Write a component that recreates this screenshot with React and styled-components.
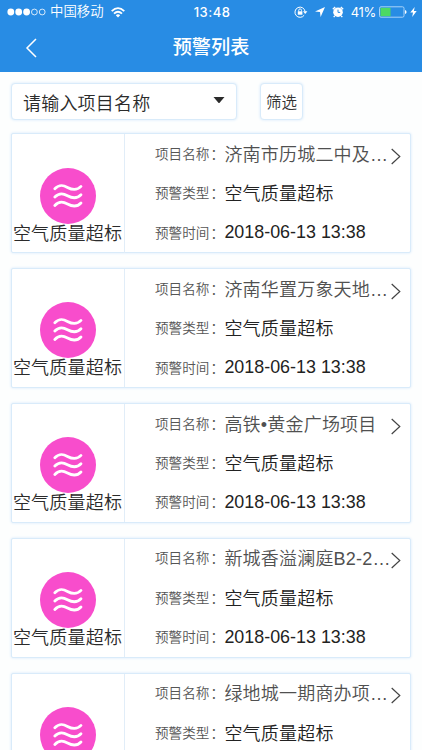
import React from "react";
import styled, { createGlobalStyle } from "styled-components";

const Global = createGlobalStyle`
  * { box-sizing: border-box; }
  html, body { margin: 0; height: 100%; overflow: hidden; background: #fdfefe; }
  body { font-family: "Liberation Sans", "Noto Sans CJK SC", sans-serif; color: #2b2b2b; font-weight: 350; }
`;
const Screen = styled.div`
  width: 422px;
  height: 750px;
  overflow: hidden;
  background: #fdfefe;
`;
const Header = styled.header`
  height: 72px;
  background: #288ce4;
  color: #fff;
`;
const StatusBar = styled.div`
  height: 24px;
  display: grid;
  grid-template-columns: 1fr auto 1fr;
  align-items: center;
  padding: 0 5px 0 7px;
`;
const StatusGroup = styled.div`
  display: flex;
  align-items: center;
  justify-content: ${(p) => (p.$end ? "flex-end" : "flex-start")};
`;
const Carrier = styled.span`
  font-size: 13.4px;
  line-height: 20px;
  margin: 0 7px 0 4px;
`;
const Clock = styled.span`
  font-family: Inter, sans-serif;
  font-size: 13px;
  font-weight: 500;
  letter-spacing: 0.5px;
`;
const Percent = styled.span`
  font-family: Inter, sans-serif;
  font-size: 13px;
  font-weight: 400;
  letter-spacing: -0.3px;
  margin: 0 3px 0 7px;
`;
const Icon = styled.svg`
  display: block;
  flex: none;
  margin-left: ${(p) => p.$gap || 0}px;
`;
const NavBar = styled.div`
  height: 48px;
  display: grid;
  grid-template-columns: 60px 1fr 60px;
  align-items: center;
`;
const Title = styled.h1`
  margin: 0;
  text-align: center;
  font-size: 19.2px;
  line-height: 28px;
  font-weight: 500;
`;
const BackButton = styled.button`
  border: 0;
  background: none;
  padding: 0 0 0 25px;
  color: inherit;
`;
const Filters = styled.div`
  display: flex;
  gap: 23px;
  padding: 11px 11px 0;
`;
const boxed = `
  border: 1px solid #d9ebfa;
  box-shadow: 0 0 3px #d5e9fb;
  background: #fff;
`;
const ProjectSelect = styled.div`
  ${boxed}
  width: 226px;
  height: 37px;
  border-radius: 4px;
  display: flex;
  align-items: center;
  justify-content: space-between;
  padding: 0 11px 0 11px;
  font-size: 18px;
  letter-spacing: 0.2px;
`;
const FilterButton = styled.button`
  ${boxed}
  width: 43px;
  height: 37px;
  border-radius: 4px;
  padding: 0 0 2px;
  font: inherit;
  font-size: 15.5px;
  color: #333;
`;
const List = styled.main`
  display: flex;
  flex-direction: column;
  gap: 14.8px;
  padding: 13.4px 11px 0;
`;
const Card = styled.article`
  ${boxed}
  height: 120px;
  flex: none;
  border-radius: 2px;
  display: grid;
  grid-template-columns: 113px 1fr;
`;
const Kind = styled.div`
  border-right: 1px solid #e1edf8;
  display: flex;
  flex-direction: column;
  align-items: center;
  padding-top: 33.3px;
  white-space: nowrap;
  font-size: 18px;
  letter-spacing: 0.2px;
`;
const KindLabel = styled.span`
  line-height: 20px;
  margin-right: 1px;
`;
const Details = styled.div`
  display: grid;
  grid-template-rows: repeat(3, 39.4px);
  padding-left: 30px;
`;
const Row = styled.div`
  display: flex;
  align-items: center;
  white-space: nowrap;
`;
const Label = styled.span`
  width: 69.4px;
  flex: none;
  font-size: 13.6px;
  color: #555;
  padding-bottom: 2px;
`;
const Colon = styled.span`
  padding-left: 1px;
`;
const Value = styled.span`
  font-size: ${(p) => (p.$latin ? 17.9 : 18)}px;
  letter-spacing: ${(p) => (p.$latin ? 0 : 0.2)}px;
  color: ${(p) => (p.$soft ? "#505050" : "#222")};
  width: 166.6px;
  flex: none;
  padding-bottom: ${(p) => (p.$latin ? 0 : 2)}px;
`;

const Signal = () => (
  <Icon width="39" height="8" viewBox="0 0 39 8">
    {[3.8, 11.7, 19.6].map((x) => <circle key={x} cx={x} cy="4" r="3.4" fill="#fff" />)}
    {[27.4, 35.2].map((x) => <circle key={x} cx={x} cy="4" r="2.9" fill="none" stroke="#fff" strokeWidth=".8" />)}
  </Icon>
);
const Wifi = () => (
  <Icon width="14" height="11" viewBox="0 0 14 11" fill="none" stroke="#fff" strokeWidth="1.8">
    <path d="M.7 4.1Q7-1.9 13.3 4.1M3 6.6Q7 2.9 11 6.6" />
    <path d="M4.8 8.2Q7 6.3 9.2 8.2L7 10.5Z" fill="#fff" stroke="none" />
  </Icon>
);
const RotationLock = () => (
  <Icon width="14" height="12" viewBox="0 0 14 12" fill="none" stroke="#fff">
    <path d="M10.2 9.2A5.1 5.1 0 1 1 11.1 5.5" />
    <path d="M9 5.3H13.4L11.2 8Z" fill="#fff" stroke="none" />
    <rect x="3.8" y="5.3" width="4.6" height="3.4" fill="#fff" stroke="none" />
    <path d="M4.7 5.5V4.3a1.4 1.4 0 0 1 2.8 0v1.2" strokeWidth=".9" />
  </Icon>
);
const Location = () => (
  <Icon $gap={7} width="10" height="10" viewBox="0 0 10 10">
    <path d="M10 0L5.6 10L5 5L0 4.4Z" fill="#fff" />
  </Icon>
);
const Alarm = () => (
  <Icon $gap={7} width="12" height="12" viewBox="0 0 12 12" fill="none">
    <circle cx="6" cy="6.2" r="4.8" fill="#fff" />
    <path d="M.8 3.3L3.2 1M11.2 3.3L8.8 1M2.8 9.8L1.7 11.2M9.2 9.8l1.1 1.4" stroke="#fff" strokeWidth="1.3" />
    <path d="M6 3.6V6.4H8.2" stroke="#288ce4" />
  </Icon>
);
const Battery = () => (
  <Icon width="28" height="12" viewBox="0 0 28 12">
    <rect x=".5" y=".8" width="24.5" height="10.4" rx="1.5" fill="none" stroke="#a9d3fa" />
    <rect x="1.5" y="1.8" width="10" height="8.4" fill="#4cd964" />
    <path d="M26 4Q27.6 4.3 27.6 6T26 8Z" fill="#fff" />
  </Icon>
);
const Bolt = () => (
  <Icon $gap={3} width="7" height="10" viewBox="0 0 7 10">
    <path d="M4.7 0L.3 5.6H3L2.2 10L6.7 4.1H3.9Z" fill="#fff" />
  </Icon>
);
const Back = () => (
  <Icon width="13" height="20" viewBox="0 0 13 20" fill="none" stroke="#fff" strokeWidth="1.5">
    <path d="M11 1L2 10L11 19" />
  </Icon>
);
const Caret = () => (
  <Icon width="12" height="9" viewBox="0 0 12 9">
    <path d="M.5 0H11.5L6.6 5.8Q6 6.4 5.4 5.8Z" fill="#2b2b2b" />
  </Icon>
);
const Air = () => (
  <Icon width="56" height="56" viewBox="0 0 56 56" fill="none">
    <circle cx="28" cy="28" r="28" fill="#f84dcc" />
    {[0, 8.3, 16.6].map((y) => (
      <path
        key={y}
        transform={`translate(0 ${y})`}
        d="M14.8 20.8C19.5 16 23.5 17.2 27.5 19.4S36.5 23.1 41 18.4"
        stroke="#fff"
        strokeWidth="2.8"
        strokeLinecap="round"
      />
    ))}
  </Icon>
);
const Chevron = () => (
  <Icon width="10" height="17" viewBox="0 0 10 17" fill="none" stroke="#444" strokeWidth="1.2">
    <path d="M.7 1L8.8 8.5L.7 16" />
  </Icon>
);
const ChevronSlot = styled.span`
  padding-top: 5px;
`;

const projects = ["济南市历城二中及…", "济南华置万象天地…", "高铁•黄金广场项目", "新城香溢澜庭B2-2…", "绿地城一期商办项…"];

const Field = ({ label, children }) => (
  <Row>
    <Label>{label}<Colon>：</Colon></Label>
    {children}
  </Row>
);

const AlertCard = ({ name }) => (
  <Card>
    <Kind>
      <Air />
      <KindLabel>空气质量超标</KindLabel>
    </Kind>
    <Details>
      <Field label="项目名称">
        <Value $soft>{name}</Value>
        <ChevronSlot><Chevron /></ChevronSlot>
      </Field>
      <Field label="预警类型">
        <Value>空气质量超标</Value>
      </Field>
      <Field label="预警时间">
        <Value $latin>2018-06-13 13:38</Value>
      </Field>
    </Details>
  </Card>
);

export default function App() {
  return (
    <Screen>
      <Global />
      <Header>
        <StatusBar>
          <StatusGroup>
            <Signal />
            <Carrier>中国移动</Carrier>
            <Wifi />
          </StatusGroup>
          <Clock>13:48</Clock>
          <StatusGroup $end>
            <RotationLock />
            <Location />
            <Alarm />
            <Percent>41%</Percent>
            <Battery />
            <Bolt />
          </StatusGroup>
        </StatusBar>
        <NavBar>
          <BackButton aria-label="返回"><Back /></BackButton>
          <Title>预警列表</Title>
        </NavBar>
      </Header>
      <Filters>
        <ProjectSelect>请输入项目名称<Caret /></ProjectSelect>
        <FilterButton>筛选</FilterButton>
      </Filters>
      <List>
        {projects.map((name) => <AlertCard key={name} name={name} />)}
      </List>
    </Screen>
  );
}
